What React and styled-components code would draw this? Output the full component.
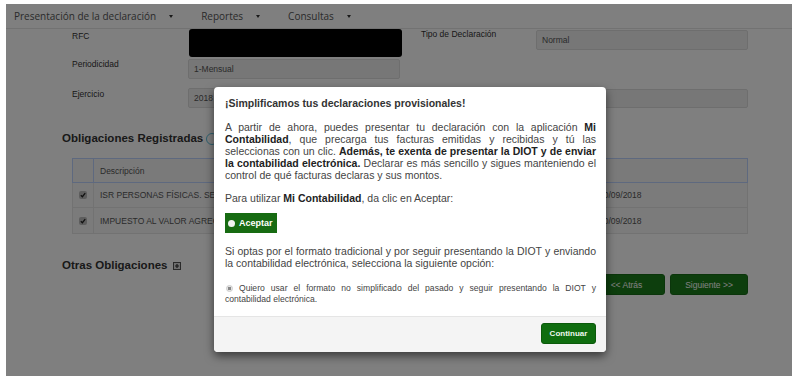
import React from "react";
import styled, { createGlobalStyle } from "styled-components";

const Global = createGlobalStyle`
  html, body { margin: 0; padding: 0; background: #fff; }
  body { font-family: "Liberation Sans", Arial, sans-serif; }
  * { box-sizing: border-box; }
`;

const Frame = styled.div`
  position: relative;
  margin: 4px 0 0 6px;
  width: 786px;
  height: 372px;
  overflow: hidden;
  background: #fff;
`;

const Page = styled.div`
  display: flex;
  flex-direction: column;
  height: 100%;
`;

const Nav = styled.nav`
  display: flex;
  align-items: center;
  height: 25px;
  padding-left: 8px;
  border-bottom: 1px solid #e4e4e4;
  background: #fff;
  font-family: "Open Sans", sans-serif;
  font-size: 10px;
  color: #555;
`;

const NavItem = styled.div`
  display: flex;
  align-items: center;
  padding: 0 14px;
  &:first-child { padding-left: 0; }
`;

const Caret = styled.span`
  width: 0;
  height: 0;
  margin-left: 13px;
  border-left: 2.5px solid transparent;
  border-right: 2.5px solid transparent;
  border-top: 3px solid #333;
`;

const Form = styled.div`
  display: grid;
  grid-template-columns: 116px 212px 136px 212px;
  padding-left: 66px;
  font-size: 8.5px;
  color: #333;
`;

const Label = styled.div`
  padding-top: ${(p) => p.$top || 0}px;
  padding-left: ${(p) => p.$indent || 0}px;
  margin-top: ${(p) => p.$mt || 0}px;
  line-height: 10px;
`;

const Input = styled.div`
  height: ${(p) => p.$h || 20}px;
  margin-top: ${(p) => p.$mt || 0}px;
  padding: 0 5px;
  display: flex;
  align-items: center;
  background: #eee;
  border: 1px solid #ddd;
  border-radius: 2px;
  color: #555;
  font-size: 8.5px;
`;

const Redacted = styled.div`
  width: 213px;
  height: 28px;
  margin-left: 1px;
  background: #000;
  border-radius: 3px;
`;

const Heading = styled.h3`
  display: flex;
  align-items: center;
  margin: ${(p) => p.$mt || 0}px 0 0 56px;
  font-size: 11.5px;
  line-height: 13px;
  font-weight: bold;
  color: #333;
`;

const InfoIcon = styled.span`
  width: 12px;
  height: 12px;
  margin-left: 3px;
  border: 1.5px solid #5bc0de;
  border-radius: 50%;
`;

const PlusIcon = styled.svg`
  margin-left: 6px;
`;

const Table = styled.table`
  width: 676px;
  margin: 13px 0 0 66px;
  border-collapse: collapse;
  font-size: 8.5px;
  color: #555;
`;

const Th = styled.th`
  height: 24px;
  padding: 0 6px;
  border: 1px solid #bcd2ff;
  background: #f5f5f5;
  text-align: left;
  font-weight: normal;
  width: ${(p) => p.$w}px;
`;

const Td = styled.td`
  height: ${(p) => p.$h || 25}px;
  padding: 0 6px;
  border: 1px solid #e4e4e4;
  background: #f6f6f6;
  white-space: nowrap;
  overflow: hidden;
`;

const CheckBox = styled.span`
  display: flex;
  align-items: center;
  justify-content: center;
  width: 8px;
  height: 8px;
  background: #bbb;
  border-radius: 2px;
`;

const BottomRow = styled.div`
  display: flex;
  justify-content: space-between;
  align-items: flex-start;
  width: 742px;
  margin-top: 25px;
`;

const ButtonGroup = styled.div`
  display: flex;
  gap: 5px;
  margin-top: 15px;
`;

const PageButton = styled.button`
  width: ${(p) => p.$w}px;
  height: 21px;
  padding: 0;
  background: #1b7d1b;
  border: 1px solid #176b17;
  border-radius: 3px;
  color: #fff;
  font-family: "Liberation Sans", Arial, sans-serif;
  font-size: 8.5px;
`;

const Backdrop = styled.div`
  position: absolute;
  inset: 0;
  background: rgba(0, 0, 0, 0.5);
`;

const Modal = styled.div`
  position: absolute;
  left: 208px;
  top: 83px;
  width: 392px;
  height: 265px;
  display: flex;
  flex-direction: column;
  background: #fff;
  border-radius: 4px;
  box-shadow: 0 4px 10px rgba(0, 0, 0, 0.55);
`;

const ModalBody = styled.div`
  flex: 1;
  padding: 10px 10px 0 11px;
  color: #444;
  font-size: 10.5px;
  line-height: 12px;
`;

const Title = styled.h4`
  margin: 0;
  font-size: 10.5px;
  line-height: 12px;
  font-weight: bold;
  color: #333;
`;

const Para = styled.p`
  margin: ${(p) => p.$mt || 0}px 0 0;
  text-align: justify;
  b { color: #222; }
`;

const AcceptButton = styled.button`
  display: flex;
  align-items: center;
  gap: 4px;
  width: 52px;
  height: 20px;
  margin-top: 9px;
  padding: 0 0 0 3px;
  background: #176b12;
  border: 0;
  border-radius: 0;
  color: #fff;
  font-family: "Liberation Sans", Arial, sans-serif;
  font-size: 9px;
  font-weight: bold;
`;

const RadioDot = styled.span`
  flex: none;
  width: 7px;
  height: 7px;
  border-radius: 50%;
  background: #f2f2f2;
`;

const OptionText = styled.p`
  margin: 13.5px 0 0;
  font-size: 8.6px;
  line-height: 11px;
  text-align: justify;
  color: #444;
`;

const SmallRadio = styled.span`
  display: inline-block;
  width: 7px;
  height: 7px;
  margin: 0 6px 0 1px;
  vertical-align: -1px;
  border-radius: 50%;
  border: 1px solid #ccc;
  background: radial-gradient(circle, #888 0 1.6px, #e6e6e6 2px);
`;

const ModalFooter = styled.div`
  display: flex;
  justify-content: flex-end;
  padding: 6px 10px 8px;
  border-top: 1px solid #e5e5e5;
  background: #f4f4f4;
  border-radius: 0 0 4px 4px;
`;

const ContinueButton = styled.button`
  width: 55px;
  height: 21px;
  padding: 0;
  background: #0f6d0f;
  border: 1px solid #0b5a0b;
  border-radius: 3px;
  color: #eef8ee;
  font-family: "Liberation Sans", Arial, sans-serif;
  font-size: 8px;
  font-weight: bold;
`;

const Check = () => (
  <CheckBox>
    <svg width="6" height="6" viewBox="0 0 6 6">
      <path d="M0.8 3.2 L2.4 4.7 L5.2 1.2" stroke="#222" strokeWidth="1.3" fill="none" />
    </svg>
  </CheckBox>
);

export default function App() {
  return (
    <>
      <Global />
      <Frame>
        <Page>
          <Nav>
            <NavItem>
              Presentación de la declaración<Caret />
            </NavItem>
            <NavItem>
              Reportes<Caret />
            </NavItem>
            <NavItem>
              Consultas<Caret />
            </NavItem>
          </Nav>

          <Form>
            <Label $top={2}>RFC</Label>
            <Redacted />
            <Label $indent={21}>Tipo de Declaración</Label>
            <Input $mt={1}>Normal</Input>

            <Label $mt={2}>Periodicidad</Label>
            <Input $mt={2}>1-Mensual</Input>
            <div />
            <div />

            <Label $mt={10}>Ejercicio</Label>
            <Input $mt={9}>2018</Input>
            <div />
            <Input $mt={10} $h={19} />
          </Form>

          <Heading $mt={24}>
            Obligaciones Registradas <InfoIcon />
          </Heading>

          <Table>
            <thead>
              <tr>
                <Th $w={19} />
                <Th $w={501}>Descripción</Th>
                <Th $w={156} />
              </tr>
            </thead>
            <tbody>
              <tr>
                <Td>
                  <Check />
                </Td>
                <Td>ISR PERSONAS FÍSICAS. SERVICIOS PROFESIONALES (HONORARIOS)</Td>
                <Td>30/09/2018</Td>
              </tr>
              <tr>
                <Td $h={26}>
                  <Check />
                </Td>
                <Td $h={26}>IMPUESTO AL VALOR AGREGADO</Td>
                <Td $h={26}>30/09/2018</Td>
              </tr>
            </tbody>
          </Table>

          <BottomRow>
            <Heading>
              Otras Obligaciones
              <PlusIcon width="8" height="8" viewBox="0 0 8 8">
                <rect x="0.5" y="0.5" width="7" height="7" fill="#ddd" stroke="#555" />
                <path d="M2 4 H6 M4 2 V6" stroke="#333" strokeWidth="1.2" />
              </PlusIcon>
            </Heading>
            <ButtonGroup>
              <PageButton $w={77}>&lt;&lt; Atrás</PageButton>
              <PageButton $w={78}>Siguiente &gt;&gt;</PageButton>
            </ButtonGroup>
          </BottomRow>
        </Page>

        <Backdrop />

        <Modal>
          <ModalBody>
            <Title>¡Simplificamos tus declaraciones provisionales!</Title>
            <Para $mt={12}>
              A partir de ahora, puedes presentar tu declaración con la aplicación{" "}
              <b>Mi Contabilidad</b>, que precarga tus facturas emitidas y recibidas y tú las
              seleccionas con un clic.{" "}
              <b>Además, te exenta de presentar la DIOT y de enviar la contabilidad electrónica.</b>{" "}
              Declarar es más sencillo y sigues manteniendo el control de qué facturas declaras y
              sus montos.
            </Para>
            <Para $mt={11}>
              Para utilizar <b>Mi Contabilidad</b>, da clic en Aceptar:
            </Para>
            <AcceptButton>
              <RadioDot />
              Aceptar
            </AcceptButton>
            <Para $mt={12}>
              Si optas por el formato tradicional y por seguir presentando la DIOT y enviando la
              contabilidad electrónica, selecciona la siguiente opción:
            </Para>
            <OptionText>
              <SmallRadio />
              Quiero usar el formato no simplificado del pasado y seguir presentando la DIOT y
              contabilidad electrónica.
            </OptionText>
          </ModalBody>
          <ModalFooter>
            <ContinueButton>Continuar</ContinueButton>
          </ModalFooter>
        </Modal>
      </Frame>
    </>
  );
}
